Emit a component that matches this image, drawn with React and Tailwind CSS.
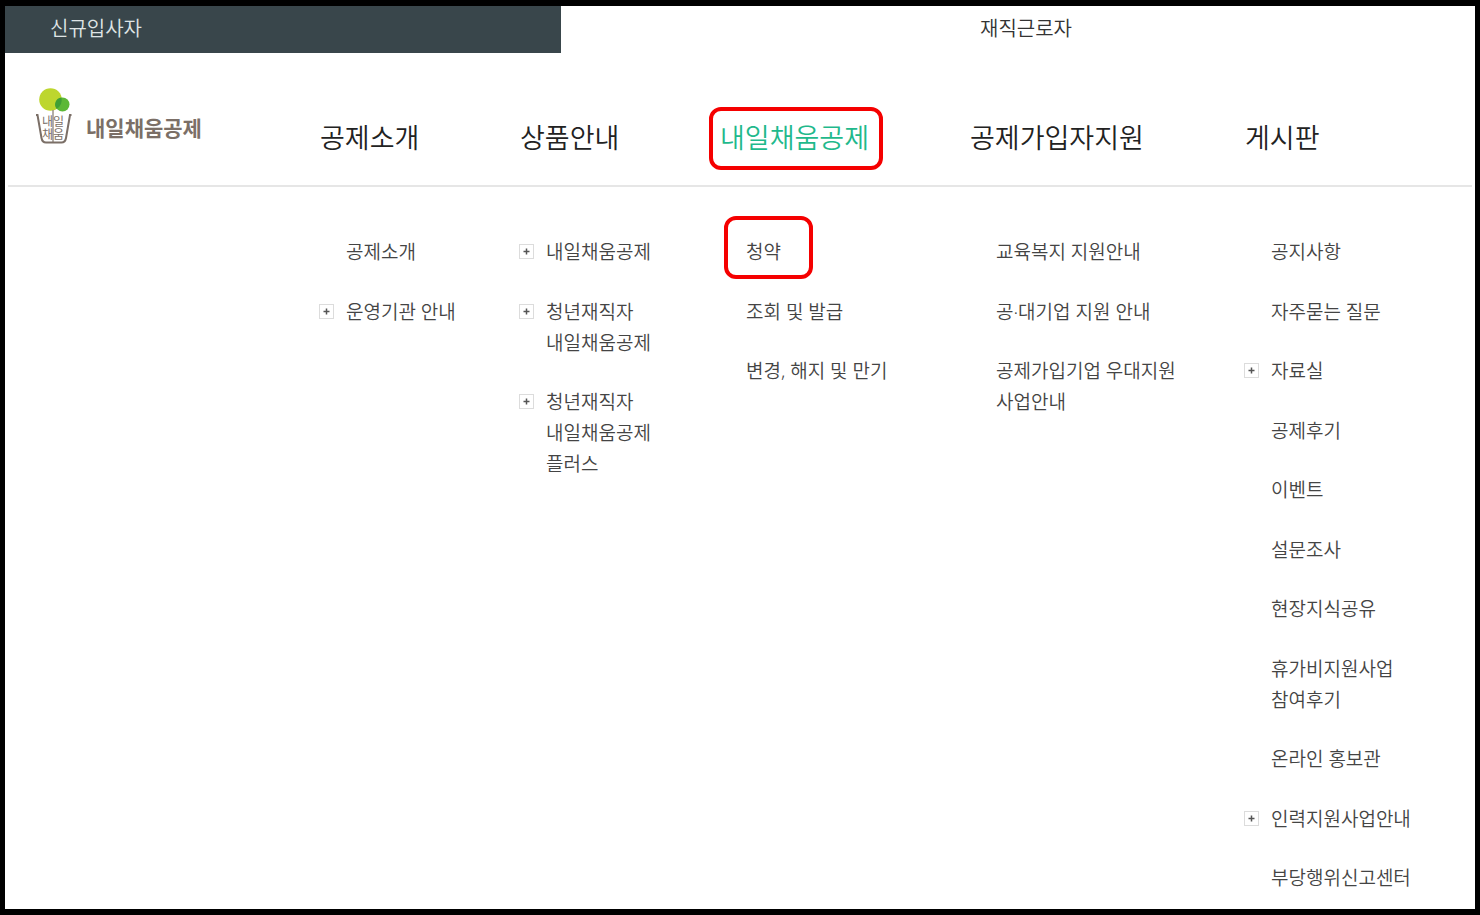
const MENU = [
  {
    title: '공제소개',
    items: [
      { lines: ['공제소개'] },
      { lines: ['운영기관 안내'], more: true },
    ],
  },
  {
    title: '상품안내',
    items: [
      { lines: ['내일채움공제'], more: true },
      { lines: ['청년재직자', '내일채움공제'], more: true },
      { lines: ['청년재직자', '내일채움공제', '플러스'], more: true },
    ],
  },
  {
    title: '내일채움공제',
    active: true,
    items: [
      { lines: ['청약'], marked: true },
      { lines: ['조회 및 발급'] },
      { lines: ['변경, 해지 및 만기'] },
    ],
  },
  {
    title: '공제가입자지원',
    items: [
      { lines: ['교육복지 지원안내'] },
      { lines: ['공·대기업 지원 안내'] },
      { lines: ['공제가입기업 우대지원', '사업안내'] },
    ],
  },
  {
    title: '게시판',
    items: [
      { lines: ['공지사항'] },
      { lines: ['자주묻는 질문'] },
      { lines: ['자료실'], more: true },
      { lines: ['공제후기'] },
      { lines: ['이벤트'] },
      { lines: ['설문조사'] },
      { lines: ['현장지식공유'] },
      { lines: ['휴가비지원사업', '참여후기'] },
      { lines: ['온라인 홍보관'] },
      { lines: ['인력지원사업안내'], more: true },
      { lines: ['부당행위신고센터'] },
    ],
  },
]

const COLS = 'grid grid-cols-[314fr_200fr_200fr_250fr_275fr_231fr]'

function Logo() {
  return (
    <a href="#" className="flex items-end gap-[13px] pl-[30px] text-[#7b6f67]">
      <svg width="38" height="58" viewBox="0 0 38 58" aria-hidden="true">
        <circle cx="15.500" cy="11.500" r="11.300" fill="#bdd62e" />
        <circle cx="27.500" cy="16.500" r="7" fill="#5cb836" />
        <path d="M26.500 9.600a11.300 11.300 0 0 1-4.800 11.400a7 7 0 0 1 4.800-11.400z"
          fill="#3f9f35" />
        <path d="M18 22v32" stroke="#8b8178" strokeWidth="1.300" />
        <path d="M1 27h1.500L6.500 50q.8 4.500 4.500 4.500h15.500q3.700 0 4.500-4.500L35 27H36.500"
          fill="none" stroke="#7b6f67" strokeWidth="2" />
        <text x="7" y="38" fontSize="12" fill="#7b6f67">내일</text>
        <text x="7" y="51" fontSize="12" fill="#7b6f67">채움</text>
      </svg>
      <span className="text-[21px] leading-9 font-bold">내일채움공제</span>
    </a>
  )
}

function PlusBox() {
  return (
    <svg width="15" height="15" viewBox="0 0 15 15"
      className="mt-[7px] shrink-0" aria-hidden="true">
      <rect x=".5" y=".5" width="14" height="14"
        fill="#fff" stroke="#dcdcdc" />
      <path d="M7.500 4.500v6M4.500 7.500h6" stroke="#555" strokeWidth="1.500" />
    </svg>
  )
}

function MenuItem({ item }) {
  return (
    <li className="flex gap-3 not-last:odd:mb-[29px] not-last:even:mb-7">
      {item.more ? <PlusBox /> : <span className="w-[15px] shrink-0" />}
      <a href="#"
        className="relative text-[19px] leading-[31px] font-[350]
          whitespace-nowrap text-[#444]">
        {item.lines.map(line => (
          <span key={line} className="block">{line}</span>
        ))}
        {item.marked && (
          <span className="absolute -top-[21px] -left-[22px] h-[63px] w-[89px]
            rounded-xl border-4 border-[#f50000]" />
        )}
      </a>
    </li>
  )
}

export default function App() {
  return (
    <div className="min-h-screen border-x-[5px] border-y-[6px] border-black
      bg-white font-['Noto_Sans','Noto_Sans_CJK_KR',sans-serif]">

      {/* Member type tabs */}
      <div className="grid grid-cols-[556fr_914fr] text-[20px] leading-[45px]
        font-[350]">
        <a href="#" className="bg-[#39464b] pb-0.5 pl-[45px] text-[#dfe4e5]">
          신규입사자
        </a>
        <a href="#" className="pb-0.5 pl-4 text-center text-[#333]">
          재직근로자
        </a>
      </div>

      <nav>
        {/* Logo and top menu */}
        <div className={`${COLS} h-[132px]`}>
          <div className="pt-[35px]">
            <Logo />
          </div>
          {MENU.map(menu => (
            <div key={menu.title} className="pt-[65px] pl-px">
              <a href="#"
                className={`relative inline-block text-[27px] leading-10
                  font-[350] whitespace-nowrap
                  ${menu.active ? 'text-[#1fb98c]' : 'text-[#222]'}`}>
                {menu.title}
                {menu.active && (
                  <span className="absolute -top-[11px] -right-[14px]
                    -left-[11px] h-[63px] rounded-xl border-4
                    border-[#f50000]" />
                )}
              </a>
            </div>
          ))}
        </div>
        <hr className="mx-[3px] border-t-2 border-[#e6e6e6]" />

        {/* Sub menus */}
        <div className={`${COLS} pt-[50px] pb-[15px]`}>
          <div />
          {MENU.map(menu => (
            <ul key={menu.title}>
              {menu.items.map(item => (
                <MenuItem key={item.lines.join('')} item={item} />
              ))}
            </ul>
          ))}
        </div>
      </nav>
    </div>
  )
}
